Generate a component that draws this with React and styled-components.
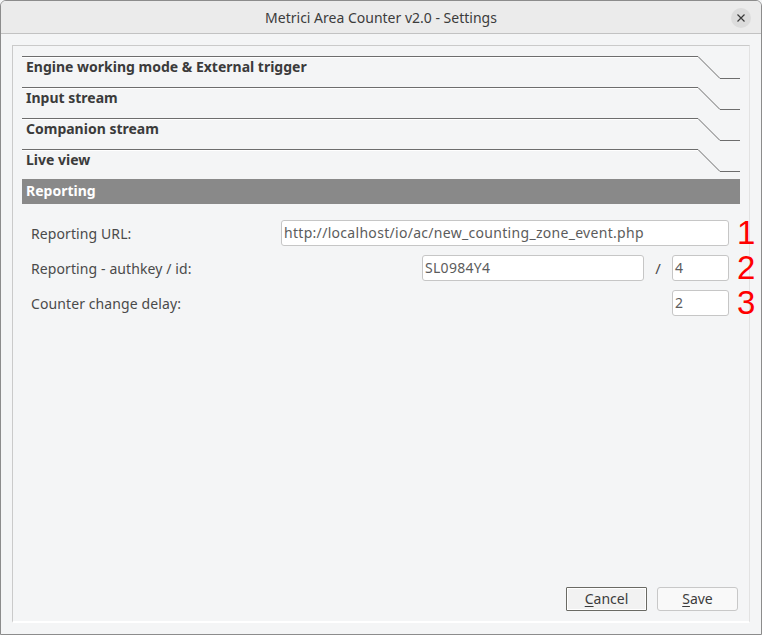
import React from "react";
import styled, { createGlobalStyle } from "styled-components";

const Global = createGlobalStyle`
  html, body { margin: 0; padding: 0; background: #f4f5f6; }
  body { font-family: "Noto Sans", "Open Sans", sans-serif; }
  * { box-sizing: border-box; }
`;

const Window = styled.div`
  width: 762px;
  height: 635px;
  display: flex;
  flex-direction: column;
  border: 1px solid #8c8c8c;
  border-radius: 6px 6px 0 0;
  background: #f4f5f6;
  overflow: hidden;
`;

const TitleBar = styled.div`
  height: 33px;
  flex: none;
  background: #ebebeb;
  border-bottom: 1px solid #c2c2c2;
  display: grid;
  grid-template-columns: 1fr auto 1fr;
  align-items: center;
  padding: 0 10px;
`;

const Title = styled.div`
  grid-column: 2;
  font-size: 14px;
  color: #3c3c3c;
  letter-spacing: 0;
`;

const CloseBtn = styled.div`
  grid-column: 3;
  justify-self: end;
  width: 20px;
  height: 20px;
  border-radius: 50%;
  background: #dcdcdc;
  display: flex;
  align-items: center;
  justify-content: center;
  margin-top: 1px;
`;

const Body = styled.div`
  flex: 1;
  padding: 11px;
  display: flex;
`;

const Frame = styled.div`
  flex: 1;
  display: flex;
  flex-direction: column;
  border-top: 1px solid #cacaca;
  border-left: 1px solid #cacaca;
  border-right: 1px solid #e2e2e2;
  border-bottom: 2px solid #ffffff;
  padding: 10px 9px 10px 9px;
`;

const Header = styled.div`
  display: flex;
  height: ${(p) => p.$h}px;
  flex: none;
`;

const HeaderLabel = styled.div`
  flex: 1;
  border-top: 1px solid #6d6d6d;
  box-shadow: inset 0 1px 0 #ffffff;
  padding: 0 0 0 4px;
  font-size: 14px;
  font-weight: 700;
  color: #3b3b3b;
  letter-spacing: 0;
`;

const Notch = styled.svg`
  flex: none;
  width: 42px;
  height: 31px;
  display: block;
`;

const ActiveHeader = styled.div`
  height: 25px;
  flex: none;
  background: #898989;
  color: #ffffff;
  font-size: 14px;
  font-weight: 700;
  padding: 2px 0 0 4px;
  letter-spacing: 0;
`;

const Form = styled.div`
  display: flex;
  flex-direction: column;
  gap: 9px;
  padding: 16px 0 0 9px;
`;

const Row = styled.div`
  display: flex;
  align-items: center;
  height: 26px;
`;

const Label = styled.div`
  flex: 1;
  font-size: 14px;
  color: #4a4a4a;
  letter-spacing: 0.1px;
`;

const Input = styled.div`
  width: ${(p) => p.$w}px;
  height: 26px;
  border: 1px solid #c6c6c6;
  border-radius: 3px;
  background: #ffffff;
  font-size: 14px;
  color: #5c5c5c;
  padding: 2px 0 0 2px;
  letter-spacing: 0.3px;
  white-space: nowrap;
  overflow: hidden;
`;

const Slash = styled.div`
  width: 28px;
  text-align: center;
  font-size: 15px;
  color: #4a4a4a;
`;

const Mark = styled.div`
  width: 22px;
  margin-right: -11px;
  padding-left: 8px;
  font-family: "Liberation Sans", Arial, sans-serif;
  font-size: 33px;
  line-height: 26px;
  color: #ff0000;
  white-space: nowrap;
`;

const Spacer = styled.div`
  flex: 1;
`;

const Buttons = styled.div`
  display: flex;
  justify-content: flex-end;
  gap: 10px;
  padding-right: 2px;
`;

const Button = styled.button`
  width: 81px;
  height: 24px;
  font-family: "Noto Sans", "Open Sans", sans-serif;
  font-size: 14px;
  color: #3c3c3c;
  padding: 0;
  border-radius: ${(p) => (p.$focus ? "1px" : "3px")};
  border: 1px solid ${(p) => (p.$focus ? "#6a6a64" : "#c8c8c8")};
  background: ${(p) => (p.$focus ? "#f2f2f2" : "#f9f9f9")};
  box-shadow: ${(p) => (p.$focus ? "inset 0 0 0 1px #ffffff" : "none")};
  line-height: 20px;
  & u { text-underline-offset: 2px; }
`;

const sections = [
  { t: "Engine working mode & External trigger", h: 31 },
  { t: "Input stream", h: 31 },
  { t: "Companion stream", h: 31 },
  { t: "Live view", h: 30 },
];

export default function App() {
  return (
    <>
      <Global />
      <Window>
        <TitleBar>
          <Title>Metrici Area Counter v2.0 - Settings</Title>
          <CloseBtn>
            <svg width="10" height="10" viewBox="0 0 10 10">
              <path d="M1.5 1.5 L8.5 8.5 M8.5 1.5 L1.5 8.5" stroke="#3a3a3a" strokeWidth="1.2" />
            </svg>
          </CloseBtn>
        </TitleBar>
        <Body>
          <Frame>
            {sections.map((s) => (
              <Header key={s.t} $h={s.h}>
                <HeaderLabel>{s.t}</HeaderLabel>
                <Notch viewBox="0 0 42 31">
                  <path d="M0 0.5 L22 22.5 L42 22.5" fill="none" stroke="#6d6d6d" strokeWidth="1" />
                </Notch>
              </Header>
            ))}
            <ActiveHeader>Reporting</ActiveHeader>
            <Form>
              <Row>
                <Label>Reporting URL:</Label>
                <Input $w={448}>http://localhost/io/ac/new_counting_zone_event.php</Input>
                <Mark>1</Mark>
              </Row>
              <Row>
                <Label>Reporting - authkey / id:</Label>
                <Input $w={222}>SL0984Y4</Input>
                <Slash>/</Slash>
                <Input $w={57}>4</Input>
                <Mark>2</Mark>
              </Row>
              <Row>
                <Label>Counter change delay:</Label>
                <Input $w={57}>2</Input>
                <Mark>3</Mark>
              </Row>
            </Form>
            <Spacer />
            <Buttons>
              <Button $focus>
                <u>C</u>ancel
              </Button>
              <Button>
                <u>S</u>ave
              </Button>
            </Buttons>
          </Frame>
        </Body>
      </Window>
    </>
  );
}
